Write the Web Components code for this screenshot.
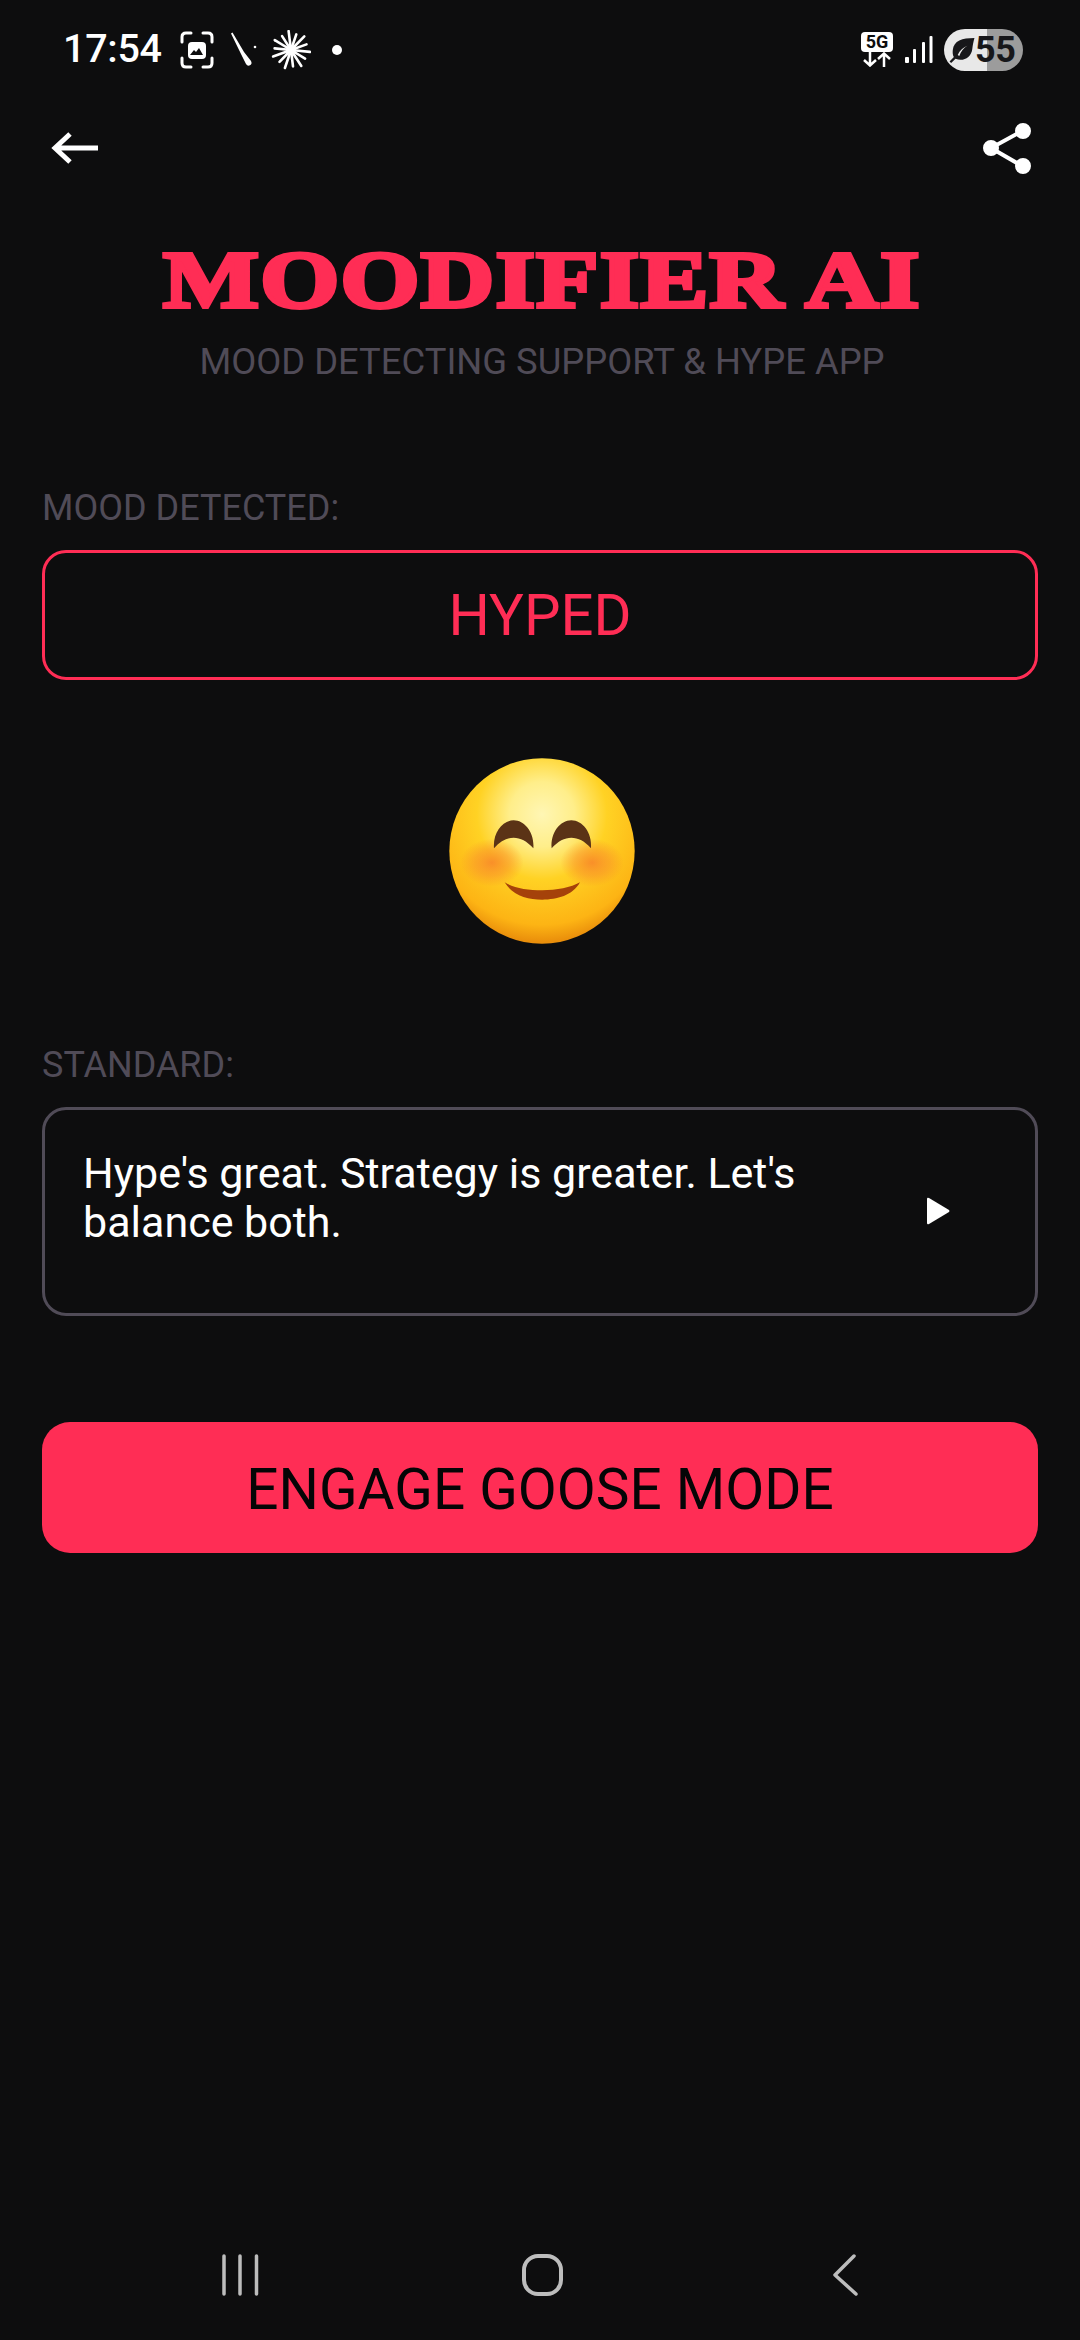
<!DOCTYPE html>
<html>
<head>
<meta charset="utf-8">
<title>Moodifier AI</title>
<style>
html, body { margin: 0; padding: 0; background: #0d0d0e; }
body { font-family: Roboto, "Noto Sans", sans-serif; color: #fff; }
.page { display: flex; flex-direction: column; width: 1080px; height: 2340px; overflow: hidden; }
</style>
</head>
<body>
<div class="page">
  <status-bar></status-bar>
  <top-bar></top-bar>
  <app-title subtitle="MOOD DETECTING SUPPORT &amp; HYPE APP">MOODIFIER AI</app-title>
  <mood-field label="MOOD DETECTED:">HYPED</mood-field>
  <mood-emoji></mood-emoji>
  <quote-card label="STANDARD:">Hype's great. Strategy is greater. Let's balance both.</quote-card>
  <action-button>ENGAGE GOOSE MODE</action-button>
  <nav-bar></nav-bar>
</div>

<script>
// status bar with the time, notification icons, signal and battery
class StatusBar extends HTMLElement {
    constructor() {
        super();
        const root = this.attachShadow({ mode: "open" });
        let rays = "";
        for (let i = 0; i < 14; i++) {
            const a = (i / 14) * Math.PI * 2 + 0.1;
            const r = i % 2 ? 16.5 : 19;
            rays += `<line x1="0" y1="0" x2="${(Math.cos(a) * r).toFixed(1)}" y2="${(Math.sin(a) * r).toFixed(1)}"/>`;
        }
        root.innerHTML = `
        <style>
            :host { display: flex; align-items: center; height: 100px; box-sizing: border-box; padding: 0 57px 0 63px; }
            .time { font: 500 39.500px/1 Roboto, sans-serif; color: #fff; width: 116px; letter-spacing: -0.3px; padding-bottom: 2px; flex: none; }
            svg { display: block; flex: none; }
            .spacer { flex: 1; }
            .five { position: relative; width: 32px; height: 36px; margin-right: 11px; }
            .five b { position: absolute; left: 0; top: 0; width: 32px; height: 20px; background: #fff; border-radius: 4px; color: #0d0d0e;
                font: 700 18px/20px Roboto, sans-serif; text-align: center; }
            .five svg { position: absolute; left: 0; top: 20px; }
            .battery { position: relative; display: flex; align-items: center; width: 79px; height: 42px; margin-left: 11px; border-radius: 21px;
                background: linear-gradient(90deg, #e8e8e8 0 43px, #9c9c9c 43px); box-sizing: border-box; padding-left: 5px; }
            .battery span { font: 700 36px/42px Roboto, sans-serif; color: #17171a; margin-left: 0; letter-spacing: -0.3px; }
        </style>
        <span class="time">17:54</span>
        <svg width="36" height="38" viewBox="0 0 36 38" fill="none" stroke="#fff" stroke-width="3" stroke-linecap="round">
            <path d="M3 11V6q0-4 4-4h5M24 2h5q4 0 4 4v5M33 27v5q0 4-4 4h-5M12 36H7q-4 0-4-4v-5"/>
            <rect x="9" y="11" width="18" height="17" rx="4" fill="#fff" stroke="none"/>
            <path d="M11 24l4-5 2 2 3-4 4 7z" fill="#0d0d0e" stroke="none"/>
        </svg>
        <svg width="30" height="36" viewBox="0 0 30 36" style="margin-left:15px" fill="#fff">
            <path d="M1 1.500L2.500 .5 14 20l7 9q1.500 3-1 4.300t-4-1.300L11 22z"/>
            <circle cx="25" cy="15" r="1.300"/>
        </svg>
        <svg width="40" height="40" viewBox="-20 -20 40 40" style="margin-left:11px" stroke="#fff" stroke-width="2.600" stroke-linecap="round">${rays}<circle r="5" fill="#fff" stroke="none"/></svg>
        <svg width="10" height="10" viewBox="0 0 10 10" style="margin-left:21px"><circle cx="5" cy="5" r="5" fill="#fff"/></svg>
        <span class="spacer"></span>
        <span class="five"><b>5G</b>
            <svg width="32" height="15" viewBox="0 0 32 15" fill="none" stroke="#fff" stroke-width="2.500">
                <path d="M9 0v13M3 8l6 5.500L15 8M23 15V2M17 7l6-5.500L29 7"/>
            </svg>
        </span>
        <svg width="29" height="28" viewBox="0 0 29 28" fill="#fff">
            <rect x="1" y="21" width="4" height="6" rx="1"/>
            <rect x="9" y="13" width="3" height="14" rx="1"/>
            <rect x="18" y="6" width="3" height="21" rx="1"/>
            <rect x="25.500" y="0" width="3" height="27" rx="1"/>
        </svg>
        <span class="battery">
            <svg width="26" height="26" viewBox="0 0 24 24" fill="#17171a"><path d="M23.500 1C12 1 4.500 3.500 3.500 12c-.3 2.500 0 5 1 6.500L.5 22.500 2 24l4-4c7 3 14.500-1 15.500-9 .4-3 1-6.500 2-10zM8 16.500c2-4.500 5-7 9-8.500-3.500 2-6 5-7.500 9.500z"/></svg>
            <span>55</span>
        </span>`;
    }
}

class TopBar extends HTMLElement {
    constructor() {
        super();
        this.attachShadow({ mode: "open" }).innerHTML = `
        <style>
            :host { display: flex; justify-content: space-between; align-items: center; height: 96px; box-sizing: border-box; padding: 0 48px 0 51px; }
            svg { display: block; }
        </style>
        <svg width="48" height="36" viewBox="0 0 48 36" fill="none" stroke="#fff" stroke-width="5">
            <path d="M47 18H5M19 4L4 18l15 14"/>
        </svg>
        <svg width="50" height="54" viewBox="0 0 50 54" fill="#fff" stroke="#fff" stroke-width="4">
            <path d="M40 10L9 27l31 18" fill="none"/>
            <circle cx="41" cy="10" r="6"/><circle cx="9" cy="27" r="6"/><circle cx="41" cy="45" r="6"/>
        </svg>`;
    }
}

class AppTitle extends HTMLElement {
    constructor() {
        super();
        const sub = this.getAttribute("subtitle");
        this.attachShadow({ mode: "open" }).innerHTML = `
        <style>
            :host { display: flex; flex-direction: column; align-items: center; }
            h1 { margin: 42px 0 0; font: 700 81px/84px "Liberation Serif", serif; color: #ff2d55; -webkit-text-stroke: 4px #ff2d55;
                letter-spacing: 1px; white-space: nowrap; transform: translateX(2px) scaleX(1.255); }
            p { margin: 18px 0 0; font: 400 36.400px/44px Roboto, sans-serif; color: #504b57; white-space: nowrap; position: relative; left: 2px; }
        </style>
        <h1><slot></slot></h1>
        <p>${sub}</p>`;
    }
}

class MoodField extends HTMLElement {
    constructor() {
        super();
        const label = this.getAttribute("label");
        this.attachShadow({ mode: "open" }).innerHTML = `
        <style>
            :host { display: block; margin: 0 42px; padding-top: 102px; }
            label { display: block; font: 400 36px/44px Roboto, sans-serif; color: #504b57; }
            div { margin-top: 20px; height: 130px; box-sizing: border-box; border: 3px solid #ff2d55; border-radius: 24px;
                display: flex; align-items: center; justify-content: center; font: 400 58px/1 Roboto, sans-serif; color: #ff2d55; }
        </style>
        <label>${label}</label>
        <div><slot></slot></div>`;
    }
}

// emoji drawn by hand, coordinates are around the centre of the face
class MoodEmoji extends HTMLElement {
    constructor() {
        super();
        this.attachShadow({ mode: "open" }).innerHTML = `
        <style>
            :host { display: flex; justify-content: center; padding: 76px 0 0 4px; }
            svg { display: block; }
        </style>
        <svg width="190" height="190" viewBox="-285 -285 570 570">
            <defs>
                <radialGradient id="face" cx="0" cy="-110" r="390" gradientUnits="userSpaceOnUse">
                    <stop offset="0" stop-color="#fff6b4"/>
                    <stop offset="0.25" stop-color="#ffee8a"/>
                    <stop offset="0.5" stop-color="#ffd224"/>
                    <stop offset="0.85" stop-color="#fdb414"/>
                    <stop offset="0.98" stop-color="#ea8f0b"/>
                </radialGradient>
                <radialGradient id="cheek">
                    <stop offset="0" stop-color="#f8842a" stop-opacity="0.85"/>
                    <stop offset="0.55" stop-color="#f98c2a" stop-opacity="0.5"/>
                    <stop offset="1" stop-color="#f98c2a" stop-opacity="0"/>
                </radialGradient>
            </defs>
            <circle r="278" fill="url(#face)"/>
            <ellipse cx="-150" cy="35" rx="95" ry="72" fill="url(#cheek)"/>
            <ellipse cx="150" cy="35" rx="95" ry="72" fill="url(#cheek)"/>
            <g fill="#5b3316">
                <path d="M-144-8C-148-55-118-92-85-92S-22-55-26-8C-45-30-65-40-85-40S-125-30-144-8z"/>
                <path d="M29-8C25-55 55-92 88-92S151-55 147-8C129-30 108-40 88-40S48-30 29-8z"/>
            </g>
            <path d="M-112 94C-60 126 60 126 114 94 92 134 45 146 1 146S-88 134-112 94z" fill="#a5420a"/>
        </svg>`;
    }
}

class QuoteCard extends HTMLElement {
    constructor() {
        super();
        const label = this.getAttribute("label");
        this.attachShadow({ mode: "open" }).innerHTML = `
        <style>
            :host { display: block; margin: 0 42px; padding-top: 97px; }
            label { display: block; font: 400 36px/44px Roboto, sans-serif; color: #504b57; }
            .box { margin-top: 20px; height: 209px; box-sizing: border-box; border: 3px solid #504b57; border-radius: 24px;
                display: flex; align-items: flex-start; padding: 39px 0 0 38px; }
            .text { width: 760px; font: 400 43px/49px Roboto, sans-serif; color: #fff; }
            svg { display: block; margin: 48px 0 0 83px; flex: none; }
        </style>
        <label>${label}</label>
        <div class="box">
            <div class="text"><slot></slot></div>
            <svg width="24" height="28" viewBox="0 0 24 28"><path d="M1 2q0-2 2-1l20 12q1 1 0 2L3 27q-2 1-2-1z" fill="#fff"/></svg>
        </div>`;
    }
}

class ActionButton extends HTMLElement {
    constructor() {
        super();
        this.attachShadow({ mode: "open" }).innerHTML = `
        <style>
            :host { display: flex; align-items: center; justify-content: center; height: 131px; box-sizing: border-box; padding-top: 5px; margin: 106px 42px 0; border-radius: 28px;
                background: #ff2d55; color: #050506; font: 400 56.700px/1 Roboto, sans-serif; }
        </style>
        <slot></slot>`;
    }
}

class NavBar extends HTMLElement {
    constructor() {
        super();
        this.attachShadow({ mode: "open" }).innerHTML = `
        <style>
            :host { display: flex; align-items: center; margin-top: auto; height: 42px; padding: 0 0 44px 222px; }
            svg { display: block; flex: none; }
        </style>
        <svg width="38" height="42" viewBox="0 0 38 42" fill="none" stroke="#bdbdbd" stroke-width="3.500" stroke-linecap="round">
            <path d="M2 2v38M18 2v38M34.500 2v38"/>
        </svg>
        <svg width="41" height="42" viewBox="0 0 41 42" fill="none" stroke="#bdbdbd" stroke-width="4" style="margin-left:262px">
            <rect x="2" y="2" width="37" height="38" rx="14"/>
        </svg>
        <svg width="26" height="42" viewBox="0 0 26 42" fill="none" stroke="#bdbdbd" stroke-width="3.500" stroke-linecap="round" stroke-linejoin="round" style="margin-left:269px">
            <path d="M22 2L3 21l21 19"/>
        </svg>`;
    }
}

customElements.define("status-bar", StatusBar);
customElements.define("top-bar", TopBar);
customElements.define("app-title", AppTitle);
customElements.define("mood-field", MoodField);
customElements.define("mood-emoji", MoodEmoji);
customElements.define("quote-card", QuoteCard);
customElements.define("action-button", ActionButton);
customElements.define("nav-bar", NavBar);
</script>
</body>
</html>
